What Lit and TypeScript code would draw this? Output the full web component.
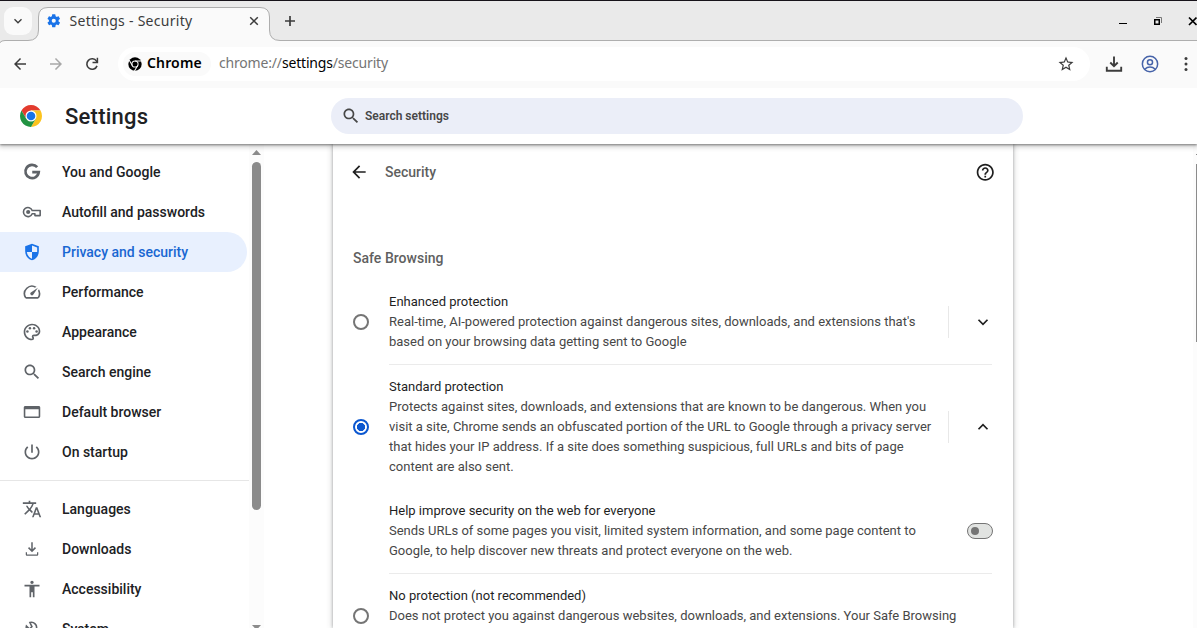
import { LitElement, html, css, svg, nothing } from "lit";
import { customElement, property } from "lit/decorators.js";
import { classMap } from "lit/directives/class-map.js";

const ICONS: Record<string, unknown> = {
  google: svg`<path d="M18.2 6.2A8 8 0 1 0 20.1 12H12.3" fill="none" stroke="currentColor" stroke-width="3.3"/>`,
  key: svg`<g fill="none" stroke="currentColor" stroke-width="1.9"><path d="M12.2 10.2A5.4 5.4 0 1 0 12.2 14H15.5V16.3H21.8V10.2Z" stroke-linejoin="round"/></g><circle cx="7.4" cy="12" r="2.5"/>`,
  shield: svg`<path d="M12 2 20.200 5.2v6c0 5.1-3.4 9.6-8.2 10.8-4.8-1.2-8.2-5.7-8.2-10.8v-6L12 2zm0 10H5.8c.5 3.8 2.9 6.900 6.2 8V12h6.200V6.600L12 4.200V12z"/>`,
  speed: svg`<path d="m20.380 8.570-1.230 1.850a8 8 0 0 1-.220 7.580H5.070A8 8 0 0 1 15.580 6.850l1.850-1.230A10 10 0 0 0 3.350 19a2 2 0 0 0 1.720 1h13.850a2 2 0 0 0 1.740-1 10 10 0 0 0-.270-10.440zM10.590 15.410a2 2 0 0 0 2.830 0l5.660-8.490-8.490 5.660a2 2 0 0 0 0 2.830z"/>`,
  palette: svg`<path d="M12 22C6.490 22 2 17.510 2 12S6.490 2 12 2s10 4.040 10 9c0 3.310-2.690 6-6 6h-1.770c-.280 0-.500.220-.500.500 0 .120.050.230.130.330.410.470.640 1.060.640 1.670A2.500 2.500 0 0 1 12 22zm0-18c-4.410 0-8 3.590-8 8s3.590 8 8 8c.280 0 .500-.220.500-.500a.540.540 0 0 0-.140-.350c-.410-.460-.630-1.050-.630-1.650a2.500 2.500 0 0 1 2.500-2.500H16c2.210 0 4-1.790 4-4 0-3.860-3.590-7-8-7z"/><circle cx="6.500" cy="11.500" r="1.500"/><circle cx="9.500" cy="7.500" r="1.500"/><circle cx="14.500" cy="7.500" r="1.500"/><circle cx="17.500" cy="11.500" r="1.500"/>`,
  search: svg`<path d="M15.5 14h-.79l-.28-.27C15.41 12.59 16 11.11 16 9.5 16 5.91 13.09 3 9.5 3S3 5.91 3 9.5 5.91 16 9.5 16c1.61 0 3.09-.59 4.23-1.57l.27.28v.79l5 4.99L20.49 19l-4.99-5zm-6 0C7.01 14 5 11.99 5 9.5S7.01 5 9.5 5 14 7.01 14 9.5 11.99 14 9.5 14z"/>`,
  browser: svg`<path d="M4 4.800h16c1.100 0 1.900.8 1.900 1.800v10.800c0 1-.8 1.800-1.900 1.800H4c-1.100 0-1.900-.8-1.900-1.800V6.600c0-1 .8-1.800 1.900-1.800zM4 8.800v8.600h16V8.800z"/>`,
  power: svg`<path d="M13 3h-2v10h2V3zm4.830 2.170-1.420 1.420C17.990 7.860 19 9.810 19 12c0 3.870-3.130 7-7 7s-7-3.130-7-7c0-2.190 1.010-4.140 2.580-5.420L6.170 5.170C4.230 6.820 3 9.260 3 12c0 4.970 4.030 9 9 9s9-4.030 9-9c0-2.740-1.230-5.180-3.170-6.830z"/>`,
  translate: svg`<path d="m12.870 15.070-2.540-2.510.030-.030c1.740-1.940 2.980-4.170 3.710-6.530H17V4h-7V2H8v2H1v1.990h11.170C11.500 7.920 10.440 9.750 9 11.350 8.070 10.320 7.300 9.190 6.690 8h-2c.730 1.630 1.730 3.170 2.980 4.560l-5.090 5.020L4 19l5-5 3.110 3.110.760-2.040zM18.500 10h-2L12 22h2l1.120-3h4.750L21 22h2l-4.500-12zm-2.620 7 1.620-4.330L19.120 17h-3.240z"/>`,
  download: svg`<path d="M18 16v2.500H6V16H4.500v2.500c0 1 .7 1.700 1.700 1.700h11.600c1 0 1.700-.7 1.700-1.700V16zM16.800 11l-1.300-1.300-2.600 2.600V4h-1.800v8.300L8.500 9.700 7.200 11l4.800 4.800z"/>`,
  accessibility: svg`<path d="M12 2c1.100 0 2 .9 2 2s-.9 2-2 2-2-.9-2-2 .9-2 2-2zm9 7h-6v13h-2v-6h-2v6H9V9H3V7h18v2z"/>`,
  wrench: svg`<path d="M9.500 4.200c2-.6 4.600 0 6.200 1.600 1.700 1.700 2.200 4.200 1.400 6.400l4.500 4.500-3.500 3.500-4.500-4.500c-2.400.8-5 .3-6.700-1.400-1.600-1.600-2.100-3.800-1.600-5.800l3.700 3.600 2.900-2.900z" fill="none" stroke="currentColor" stroke-width="1.900"/>`,
  back: svg`<path d="M20 11H7.83l5.59-5.590L12 4l-8 8 8 8 1.410-1.410L7.830 13H20v-2z"/>`,
  forward: svg`<path d="M4 11h12.170l-5.590-5.590L12 4l8 8-8 8-1.410-1.410L16.170 13H4v-2z"/>`,
  reload: svg`<path d="M18.700 14.500A7 7 0 1 1 18 8.200L19.500 10" fill="none" stroke="currentColor" stroke-width="2.100"/><path d="M20.200 3.500V11h-7.500V9h5.500V3.500z"/>`,
  help: svg`<path d="M11 18h2v-2h-2v2zm1-16C6.480 2 2 6.480 2 12s4.480 10 10 10 10-4.480 10-10S17.520 2 12 2zm0 18c-4.410 0-8-3.590-8-8s3.590-8 8-8 8 3.590 8 8-3.590 8-8 8zm0-14c-2.210 0-4 1.790-4 4h2c0-1.100.9-2 2-2s2 .9 2 2c0 2-3 1.750-3 5h2c0-2.250 3-2.500 3-5 0-2.210-1.790-4-4-4z"/>`,
  star: svg`<path d="m22 9.240-7.190-.620L12 2 9.190 8.630 2 9.240l5.460 4.730L5.820 21 12 17.270 18.180 21l-1.630-7.030L22 9.240zM12 15.400l-3.760 2.270 1-4.280-3.320-2.880 4.380-.380L12 6.100l1.710 4.040 4.380.380-3.320 2.880 1 4.280L12 15.400z"/>`,
  tray: svg`<path d="M12 2v13M7 10l5 5 5-5M2.400 15.500v5.500h19.200v-5.500" fill="none" stroke="currentColor" stroke-width="2.500"/>`,
  account: svg`<g fill="none" stroke="currentColor" stroke-width="2"><circle cx="12" cy="12" r="10.200"/><circle cx="12" cy="9.600" r="3.400"/><path d="M5 19c4-3.800 10-3.800 14 0"/></g>`,
  menu: svg`<circle cx="12" cy="4.800" r="2"/><circle cx="12" cy="12" r="2"/><circle cx="12" cy="19.200" r="2"/>`,
  down: svg`<path d="m6 9 6 6 6-6" fill="none" stroke="currentColor" stroke-width="2.300"/>`,
  up: svg`<path d="m6 15 6-6 6 6" fill="none" stroke="currentColor" stroke-width="2.300"/>`,
  close: svg`<path d="m5.500 5.500 13 13M18.500 5.500l-13 13" fill="none" stroke="currentColor" stroke-width="2.600"/>`,
  plus: svg`<path d="M12 2v20M2 12h20" fill="none" stroke="currentColor" stroke-width="3.400"/>`,
  gear: svg`<path d="M19.430 12.980c.040-.320.070-.640.070-.980s-.030-.660-.070-.980l2.110-1.650c.190-.150.240-.420.120-.640l-2-3.460c-.120-.220-.390-.300-.610-.220l-2.490 1c-.520-.400-1.080-.730-1.690-.980l-.380-2.650A.488.488 0 0 0 14 2h-4c-.250 0-.460.180-.490.420l-.380 2.650c-.610.250-1.170.590-1.690.980l-2.490-1c-.230-.090-.490 0-.610.220l-2 3.460c-.130.220-.070.490.120.640l2.110 1.650c-.040.320-.070.650-.070.980s.030.660.070.980l-2.110 1.650c-.190.150-.240.420-.120.640l2 3.460c.120.220.390.300.610.220l2.490-1c.520.400 1.080.730 1.690.980l.380 2.650c.030.240.240.420.490.420h4c.250 0 .460-.180.490-.420l.380-2.650c.610-.250 1.170-.590 1.690-.980l2.490 1c.230.090.490 0 .610-.220l2-3.460c.120-.220.070-.490-.120-.640l-2.110-1.650zM12 15.200a3.200 3.200 0 1 1 0-6.400 3.200 3.200 0 0 1 0 6.400z"/>`,
  chromeMono: svg`<circle cx="12" cy="12" r="11.500"/><g fill="none" stroke="#fafafa" stroke-width="1.800"><circle cx="12" cy="12" r="5.300"/><path d="M12 6.700h11M16.600 14.650 11 24M7.400 14.650 1.900 5.200"/></g>`,
  chromeLogo: svg`<g transform="scale(.5)"><path fill="#e33b2e" d="M3.220 12A24 24 0 0 1 44.780 12H24v12L13.610 30z"/><path fill="#fcc31e" d="M44.780 12A24 24 0 0 1 24 48l10.390-18L24 24V12z"/><path fill="#229342" d="M24 48A24 24 0 0 1 3.220 12l10.390 18L24 24l10.390 6z"/><circle cx="24" cy="24" r="12" fill="#fff"/><circle cx="24" cy="24" r="9.400" fill="#1a73e8"/></g>`,
};

@customElement("ui-icon")
class UiIcon extends LitElement {
  static styles = css`
    :host { display: inline-flex; flex: none; width: 20px; height: 20px; }
    .glyph { width: 100%; height: 100%; fill: currentColor; display: block; }
  `;
  @property() name = "";
  render() {
    return html`<svg class="glyph" viewBox="0 0 24 24">${ICONS[this.name]}</svg>`;
  }
}

@customElement("browser-chrome")
class BrowserChrome extends LitElement {
  static styles = css`
    :host { display: block; flex: none; font-family: "Noto Sans", sans-serif; color: #3c3c3c; }
    .strip { position: relative; display: flex; align-items: center; height: 44px; padding: 0 0 2px 4px; box-sizing: border-box; background: #eaeaea; }
    .outline { position: absolute; left: 0; top: 0; }
    .list { position: relative; width: 28px; height: 28px; border-radius: 9px; background: #fafafa; display: flex; align-items: center; justify-content: center; }
    .list ui-icon { width: 14px; height: 14px; }
    .tab { position: relative; display: flex; align-items: center; width: 231px; margin-left: 6px; padding: 0 8px 0 8px; box-sizing: border-box; font-size: 14px; line-height: 20px; }
    .tab .gear { width: 15.500px; height: 15.500px; color: #1a73e8; margin-right: 8px; }
    .title { flex: 1; white-space: nowrap; letter-spacing: .28px; }
    .tab .x { width: 14px; height: 14px; }
    .plus { position: relative; width: 12px; height: 12px; margin-left: 15px; }
    .controls { position: absolute; left: 1118px; top: 14px; }
    .bar { display: flex; align-items: center; height: 44px; padding-bottom: 4px; box-sizing: border-box; background: #fafafa; }
    .bar ui-icon { width: 18px; height: 18px; }
    .nav { display: flex; gap: 18px; padding-left: 11px; width: 107px; }
    .off { color: #a8a8a8; }
    .omni { width: 972px; height: 34px; border-radius: 17px; background: #fff; display: flex; align-items: center; padding: 0 15px 0 5px; box-sizing: border-box; font-size: 14px; line-height: 20px; }
    .chip { display: flex; align-items: center; height: 24px; width: 88px; box-sizing: border-box; border-radius: 12px; padding-left: 5px; background: #fafafa; color: #000; font-weight: 600; margin-right: 8px; letter-spacing: .15px; }
    .label { padding-bottom: 2px; }
    .bar .mono { width: 14px; height: 14px; margin-right: 5px; }
    .url { flex: 1; color: #757575; white-space: nowrap; letter-spacing: -.18px; padding-bottom: 2px; }
    .host { color: #000; }
    .actions { display: flex; gap: 18px; padding-left: 15px; }
    .account { color: #4663a9; }
  `;
  render() {
    return html`
      <div class="strip">
        <svg class="outline" width="1197" height="44">
          <path d="M0 44V42.500Q1.500 40.500 5 40.500H28Q38.500 40.500 38.500 30V17Q38.500 7.500 48 7.500H260Q269.500 7.500 269.500 17V30Q269.500 40.500 280 40.500H1198V44z" fill="#fafafa" stroke="#aeaeae"/>
          <path d="M0 43.500H1197" stroke="#fafafa"/><path d="M0 .5H1197" stroke="#17131a"/>
        </svg>
        <span class="list"><ui-icon name="down"></ui-icon></span>
        <div class="tab"><ui-icon class="gear" name="gear"></ui-icon><span class="title">Settings - Security</span><ui-icon class="x" name="close"></ui-icon></div>
        <ui-icon class="plus" name="plus"></ui-icon>
        <svg class="controls" width="79" height="14" fill="none" stroke="#000">
          <path d="M1 9.500h8"/><path d="M36.750 5.750h4.500v4.500h-4.500z" stroke-width="1.500"/><path d="M38 3.500h5.500V9" stroke="#777"/><path d="m71 3.500 7.500 7.500M78.500 3.500 71 11" stroke-width="1.700"/>
        </svg>
      </div>
      <div class="bar">
        <div class="nav"><ui-icon name="back"></ui-icon><ui-icon class="off" name="forward"></ui-icon><ui-icon name="reload"></ui-icon></div>
        <div class="omni">
          <span class="chip"><ui-icon class="mono" name="chromeMono"></ui-icon><span class="label">Chrome</span></span>
          <span class="url">chrome://<span class="host">settings</span>/security</span>
          <ui-icon name="star"></ui-icon>
        </div>
        <div class="actions"><ui-icon name="tray"></ui-icon><ui-icon class="account" name="account"></ui-icon><ui-icon name="menu"></ui-icon></div>
      </div>`;
  }
}

const MENU = [
  [["google", "You and Google"], ["key", "Autofill and passwords"], ["shield", "Privacy and security"], ["speed", "Performance"], ["palette", "Appearance"], ["search", "Search engine"], ["browser", "Default browser"], ["power", "On startup"]],
  [["translate", "Languages"], ["download", "Downloads"], ["accessibility", "Accessibility"], ["wrench", "System"]],
];

@customElement("settings-menu")
class SettingsMenu extends LitElement {
  static styles = css`
    :host { display: flex; width: 264px; flex: none; font-size: 14px; font-weight: 500; color: #202124; }
    .list { width: 249px; padding-top: 8px; }
    .item { display: flex; align-items: center; gap: 20px; height: 40px; width: 247px; box-sizing: border-box; padding-left: 22px; border-radius: 0 20px 20px 0; white-space: nowrap; }
    .item ui-icon { color: #5f6368; }
    .item.on { background: #e8f0fe; color: #1967d2; }
    .item.on ui-icon { color: #1a73e8; }
    .group + .group { border-top: 1px solid #e6e6e6; margin-top: 8px; padding-top: 8px; }
    .track { width: 15px; background: #fcfcfc; display: flex; flex-direction: column; align-items: center; padding-top: 6px; box-sizing: border-box; }
    .arrow { width: 9px; height: 5px; background: #8b8b8b; clip-path: polygon(50% 0, 100% 100%, 0 100%); flex: none; }
    .arrow.end { transform: scaleY(-1); margin-top: 115px; }
    .thumb { width: 9px; height: 348px; flex: none; margin-top: 7px; border-radius: 4.500px; background: #8b8b8b; }
  `;
  render() {
    return html`
      <nav class="list">
        ${MENU.map((g) => html`<div class="group">${g.map(([icon, label]) => html`<div class=${classMap({ item: true, on: icon === "shield" })}><ui-icon name=${icon}></ui-icon>${label}</div>`)}</div>`)}
      </nav>
      <div class="track"><span class="arrow"></span><span class="thumb"></span><span class="arrow end"></span></div>`;
  }
}

interface Option { title: string; lines: string[]; control?: string; checked?: boolean; }
const OPTIONS: Option[] = [
  { title: "Enhanced protection", control: "down", lines: ["Real-time, AI-powered protection against dangerous sites, downloads, and extensions that's", "based on your browsing data getting sent to Google"] },
  { title: "Standard protection", control: "up", checked: true, lines: ["Protects against sites, downloads, and extensions that are known to be dangerous. When you", "visit a site, Chrome sends an obfuscated portion of the URL to Google through a privacy server", "that hides your IP address. If a site does something suspicious, full URLs and bits of page", "content are also sent."] },
  { title: "Help improve security on the web for everyone", control: "toggle", lines: ["Sends URLs of some pages you visit, limited system information, and some page content to", "Google, to help discover new threats and protect everyone on the web."] },
  { title: "No protection (not recommended)", lines: ["Does not protect you against dangerous websites, downloads, and extensions. Your Safe Browsing"] },
];

@customElement("security-page")
class SecurityPage extends LitElement {
  static styles = css`
    :host { display: block; width: 680px; flex: none; box-sizing: border-box; padding: 0 20px; background: #fff; box-shadow: 0 0 3px 0 rgba(60, 64, 67, .4), 0 0 6px 1px rgba(60, 64, 67, .18); color: #5f5f5f; }
    .head { display: flex; align-items: center; height: 56px; font-size: 14px; font-weight: 500; }
    .head .back { color: #1f1f1f; margin: 0 16px 0 -4px; width: 20px; height: 20px; }
    .head .help { color: #1f1f1f; margin-left: auto; margin-right: -2px; width: 20.500px; height: 20.500px; }
    .section { margin-top: 48px; line-height: 20px; font-size: 14px; font-weight: 500; padding-bottom: 24px; letter-spacing: .02px; }
    .row { display: grid; grid-template-columns: 36px 1fr 45px; align-items: center; min-height: 60px; }
    .text { font-size: 13px; line-height: 20px; color: #474747; white-space: nowrap; min-height: 60px; }
    .title { color: #1f1f1f; }
    .radio { width: 16px; height: 16px; border-radius: 50%; border: 2px solid #757575; box-sizing: border-box; }
    .radio.on { border-color: #0b57d0; background: radial-gradient(circle, #0b57d0 3.800px, #fff 4.400px); }
    .more { height: 32px; border-left: 1px solid #e8e8e8; display: flex; align-items: center; justify-content: center; padding-left: 24px; color: #1f1f1f; }
    .more ui-icon { width: 18px; height: 18px; }
    .toggle { width: 26px; height: 16px; border: 1px solid #757575; border-radius: 8px; background: #e1e3e1; box-sizing: border-box; justify-self: end; padding: 3px; }
    .knob { display: block; width: 8px; height: 8px; border-radius: 50%; background: #757575; }
    .divider { height: 1px; background: #ebebeb; margin: 12px 1px 12px 36px; }
    .space { height: 24px; }
  `;
  private control(kind?: string) {
    if (!kind) return nothing;
    return kind === "toggle"
      ? html`<span class="toggle"><span class="knob"></span></span>`
      : html`<span class="more"><ui-icon name=${kind}></ui-icon></span>`;
  }
  render() {
    return html`
      <div class="head"><ui-icon class="back" name="back"></ui-icon>Security<ui-icon class="help" name="help"></ui-icon></div>
      <div class="section">Safe Browsing</div>
      ${OPTIONS.map((o, i) => html`
        ${i === 0 ? nothing : i === 2 ? html`<div class="space"></div>` : html`<div class="divider"></div>`}
        <div class="row">
          ${o.control === "toggle" ? html`<span></span>` : html`<span class=${classMap({ radio: true, on: !!o.checked })}></span>`}
          <div class="text"><div class="title">${o.title}</div>${o.lines.map((l) => html`<div>${l}</div>`)}</div>
          ${this.control(o.control)}
        </div>`)}`;
  }
}

@customElement("app-root")
class AppRoot extends LitElement {
  static styles = css`
    :host { display: flex; flex-direction: column; width: 1197px; height: 628px; overflow: hidden; background: #fff; font-family: Roboto, sans-serif; }
    .top { position: relative; display: flex; align-items: center; flex: none; height: 56px; box-sizing: border-box; padding-left: 20px; background: #fff; box-shadow: 0 1px 2px rgba(0, 0, 0, .4), 0 2px 5px 1px rgba(0, 0, 0, .2); clip-path: inset(0 0 -10px 0); }
    .logo { width: 22px; height: 22px; }
    .name { box-sizing: content-box; width: 266px; padding-left: 23px; font-size: 22px; font-weight: 500; color: #202124; letter-spacing: .25px; }
    .search { display: flex; align-items: center; gap: 4px; width: 692px; height: 36px; padding-left: 10px; box-sizing: border-box; border-radius: 18px; background: #ebeef8; color: #474747; font-size: 12px; font-weight: 600; }
    .body { display: flex; flex: 1; min-height: 0; overflow: hidden; }
    .page { flex: 1; display: flex; padding-left: 69px; }
    .rail { width: 4px; margin-left: auto; background: #fcfcfc; display: flex; flex-direction: column; align-items: flex-end; padding-top: 10px; box-sizing: border-box; }
    .tip { width: 1px; height: 1px; background: #8b8b8b; flex: none; }
    .thumb { width: 1px; height: 178px; flex: none; margin-top: 9px; background: #8b8b8b; }
  `;
  render() {
    return html`
      <browser-chrome></browser-chrome>
      <header class="top"><ui-icon class="logo" name="chromeLogo"></ui-icon><span class="name">Settings</span><div class="search"><ui-icon name="search"></ui-icon>Search settings</div></header>
      <div class="body">
        <settings-menu></settings-menu>
        <main class="page"><security-page></security-page><div class="rail"><span class="tip"></span><span class="thumb"></span></div></main>
      </div>`;
  }
}
